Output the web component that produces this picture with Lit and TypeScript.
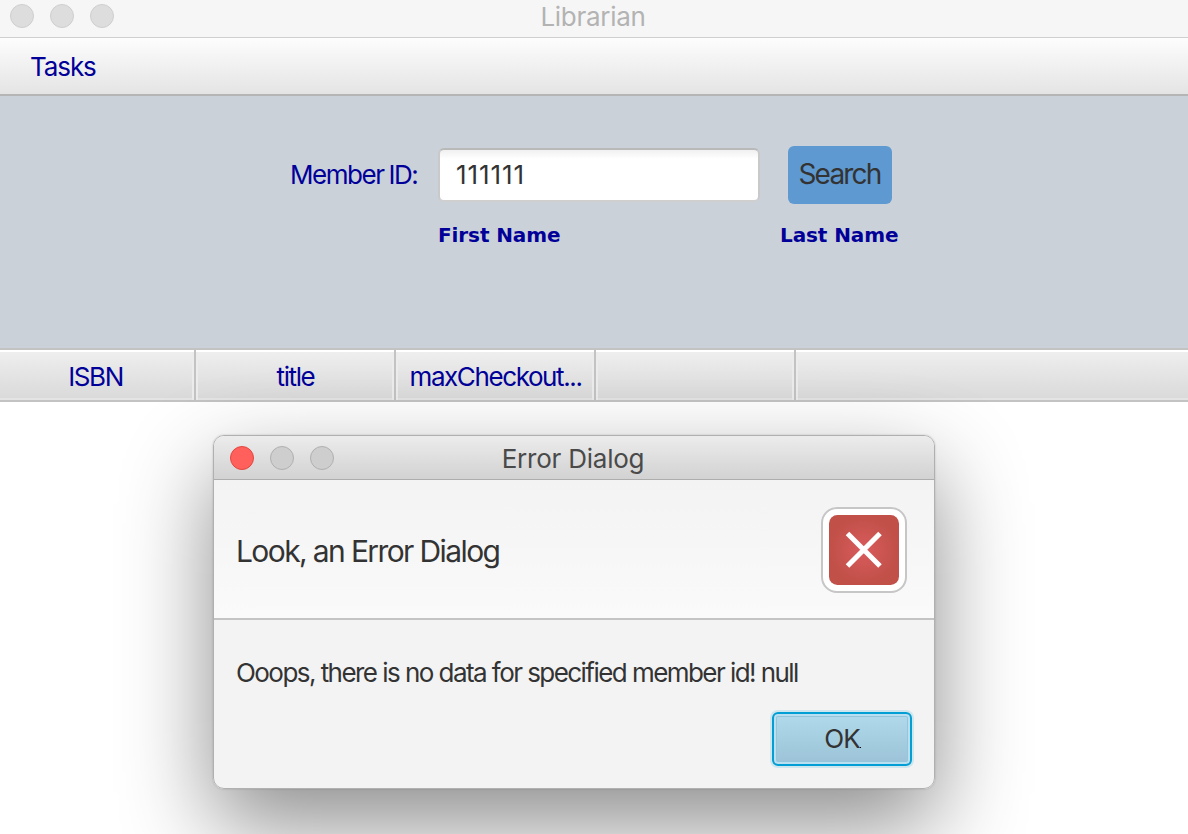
import { LitElement, html, css } from "lit";
import { customElement } from "lit/decorators.js";

@customElement("app-root")
export class AppRoot extends LitElement {
  static styles = css`
    :host {
      display: flex;
      flex-direction: column;
      position: relative;
      width: 1188px;
      height: 834px;
      overflow: hidden;
      background: #fff;
      color: #000099;
      font: 26px/32px Inter, "Liberation Sans", sans-serif;
      white-space: nowrap;
    }
    * { box-sizing: border-box; }
    .titlebar {
      display: grid;
      grid-template-columns: 1fr auto 1fr;
      height: 38px;
      padding: 1px 10px 3px;
      background: #f6f6f6;
      border-bottom: 1px solid #cfcfcf;
      color: #b3b3b3;
    }
    .title { letter-spacing: -0.3px; margin-left: -2px; }
    .dbar .title { letter-spacing: -0.22px; }
    .lights { display: flex; gap: 16px; padding-top: 3px; }
    .light {
      width: 24px;
      height: 24px;
      border-radius: 50%;
      background: #dddddd;
      border: 1px solid #cfcfcf;
    }
    .menubar {
      height: 58px;
      padding: 13px 30px;
      background: linear-gradient(#fdfdfd, #e4e4e4);
      border-bottom: 2px solid #b5b5b5;
    }
    .menu { letter-spacing: -1.1px; }
    .form {
      height: 252px;
      padding: 50px 0 0 290px;
      background: #cbd1d9;
    }
    .row { display: flex; align-items: center; height: 58px; }
    .label { width: 148px; letter-spacing: -1.45px; word-spacing: -1px; }
    .field {
      width: 322px;
      height: 54px;
      margin-right: 28px;
      border: 2px solid #c9c9c9;
      border-top-color: #b9b9b9;
      border-bottom-color: #cfcfcf;
      border-radius: 6px;
      padding: 9px 16px;
      background: linear-gradient(#f0f0f0, #fff 9px);
      color: #333;
      letter-spacing: 0.9px;
    }
    .search {
      width: 104px;
      height: 58px;
      padding-right: 1px;
      border-radius: 6px;
      background: #5e99d1;
      color: #333;
      font-size: 28px;
      line-height: 57px;
      text-align: center;
      letter-spacing: -1.8px;
    }
    .names {
      display: flex;
      padding: 18px 0 0 148px;
      font: bold 20px/26px "DejaVu Sans", sans-serif;
      letter-spacing: -0.1px;
    }
    .first { width: 342px; }
    .thead {
      display: grid;
      grid-template-columns: 196px 200px 200px 200px 1fr;
      grid-template-rows: 50px;
      height: 54px;
      border-top: 2px solid #c3c3c3;
      border-bottom: 2px solid #c3c3c3;
    }
    .th {
      border-right: 2px solid #c3c3c3;
      background: linear-gradient(#efefef, #d9d9d9);
      box-shadow: inset 0 2px #fff, inset 2px 0 #ececec, inset -2px 0 #ececec, inset 0 -2px #e4e4e4;
      text-align: center;
      line-height: 54px;
      letter-spacing: -1.4px;
      padding-left: 1px;
    }
    .th:first-child {
      padding: 0 3px 0 0;
      box-shadow: inset 0 2px #fff, inset -2px 0 #ececec, inset 0 -2px #e4e4e4;
    }
    .th:last-child {
      border-right: 0;
      box-shadow: inset 0 2px #fff, inset 2px 0 #ececec, inset 0 -2px #e4e4e4;
    }
    .dialog {
      position: absolute;
      left: 213px;
      top: 435px;
      width: 722px;
      height: 354px;
      border: 1px solid #b0b0b0;
      border-radius: 11px;
      overflow: hidden;
      background: #f3f3f3;
      color: #333;
    }
    .shadow {
      position: absolute;
      left: 213px;
      top: 435px;
      width: 722px;
      height: 354px;
      border-radius: 11px;
      box-shadow: 0 36px 90px rgba(0, 0, 0, 0.45), 0 0 2px rgba(0, 0, 0, 0.22);
    }
    .dbar {
      display: grid;
      grid-template-columns: 1fr auto 1fr;
      height: 44px;
      padding: 7px 16px 0;
      border-bottom: 1px solid #adadad;
      background: linear-gradient(#ececec, #d2d2d2);
      color: #4a4a4a;
    }
    .dbar .light { background: #cecece; border-color: #b0b0b0; }
    .dbar .close { background: #ff605c; border-color: #e2463f; }
    .dhead {
      display: flex;
      justify-content: space-between;
      align-items: center;
      height: 140px;
      padding: 0 27px 0 22px;
      border-bottom: 2px solid #c4c4c4;
      background: linear-gradient(#f3f3f3, #fafafa);
      font-size: 30px;
    }
    .heading { letter-spacing: -1.6px; word-spacing: -0.1px; padding-top: 3px; }
    .icon { display: block; width: 86px; height: 86px; margin-top: 1px; }
    .dbody {
      display: flex;
      flex-direction: column;
      padding: 37px 22px 0 22px;
    }
    .message { letter-spacing: -1.56px; word-spacing: 0.05px; }
    .ok {
      align-self: flex-end;
      position: relative;
      width: 140px;
      height: 54px;
      margin-top: 23px;
      border: 2px solid #039ed3;
      border-radius: 6px;
      background: linear-gradient(#b1daec, #9bc2d6);
      box-shadow: 0 0 0 2px #cfe6ef, inset 0 0 0 2px #b9dff0, inset 0 0 0 3px #94c5da;
      text-align: center;
      line-height: 50px;
      letter-spacing: -0.9px;
    }
    .ok::after {
      content: "";
      position: absolute;
      right: 49px;
      bottom: 16px;
      width: 1px;
      height: 1px;
      background: #000;
    }
  `;

  private columns = ["ISBN", "title", "maxCheckout...", "", ""];

  render() {
    return html`
      <div class="titlebar">
        <div class="lights"><i class="light"></i><i class="light"></i><i class="light"></i></div>
        <span class="title">Librarian</span>
      </div>
      <div class="menubar"><span class="menu">Tasks</span></div>
      <div class="form">
        <div class="row">
          <span class="label">Member ID:</span>
          <div class="field">111111</div>
          <div class="search">Search</div>
        </div>
        <div class="names"><span class="first">First Name</span><span>Last Name</span></div>
      </div>
      <div class="thead">${this.columns.map((c) => html`<div class="th">${c}</div>`)}</div>
      <div class="shadow"></div>
      <div class="dialog">
        <div class="dbar">
          <div class="lights"><i class="light close"></i><i class="light"></i><i class="light"></i></div>
          <span class="title">Error Dialog</span>
        </div>
        <div class="dhead">
          <span class="heading">Look, an Error Dialog</span>
          <svg class="icon" viewBox="0 0 86 86">
            <defs>
              <radialGradient id="red">
                <stop offset="0" stop-color="#d95b5c" />
                <stop offset="1" stop-color="#c05048" />
              </radialGradient>
            </defs>
            <rect x="1" y="1" width="84" height="84" rx="15" fill="#fff" stroke="#c6c6c6" stroke-width="2" />
            <rect x="8" y="8" width="70" height="70" rx="8.5" fill="url(#red)" />
            <path d="M26.5 26.5 59 59M59 26.5 26.5 59" stroke="#fff" stroke-width="5" />
          </svg>
        </div>
        <div class="dbody">
          <span class="message">Ooops, there is no data for specified member id! null</span>
          <div class="ok">OK</div>
        </div>
      </div>
    `;
  }
}
